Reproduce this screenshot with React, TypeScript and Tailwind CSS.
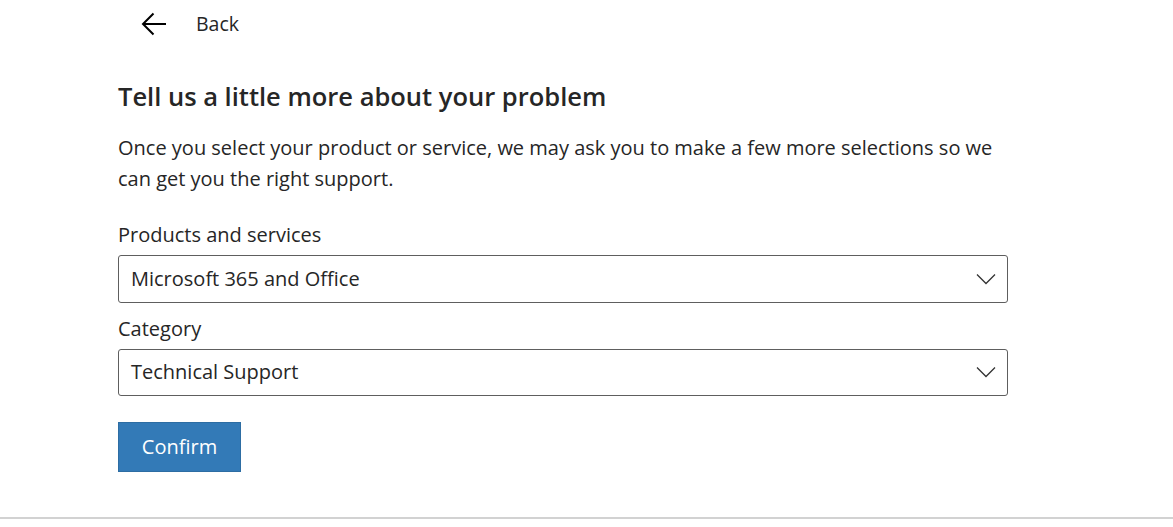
const font = { fontFamily: '"Open Sans", "Noto Sans", sans-serif' };

function Chevron() {
    return (
        <svg width="20" height="12" viewBox="0 0 20 12" fill="none" className="text-[#333]">
            <path d="M1 1.5 L10 10.5 L19 1.5" stroke="currentColor" strokeWidth="1.3" />
        </svg>
    );
}

function SelectBox({ label, value }: { label: string; value: string }) {
    return (
        <div className="flex flex-col">
            <label className="text-[20px] leading-[26px] text-[#262626]">{label}</label>
            <div className="mt-[7px] h-[47.5px] flex items-center justify-between border border-[#5e5e5e] rounded-[3px] pl-[12px] pr-[11px]">
                <span className="text-[20px] text-[#262626]">{value}</span>
                <Chevron />
            </div>
        </div>
    );
}

export default function App() {
    return (
        <div className="w-[1173px] h-[527px] bg-white flex flex-col" style={font}>
            <div className="flex-1 pl-[118px]">
                {/* Back link */}
                <div className="h-[47px] flex items-center pl-[23px] gap-[29px] text-[#262626]">
                    <svg width="26" height="24" viewBox="0 0 26 24" fill="none" className="text-black">
                        <path d="M12.5 1.5 L2 12 L12.5 22.5 M2 12 H25" stroke="currentColor" strokeWidth="2" />
                    </svg>
                    <span className="text-[19.5px]">Back</span>
                </div>

                <div className="w-[890px] pt-[32px]">
                    <h1 className="text-[25.5px] font-semibold leading-[34px] text-[#262626]">
                        Tell us a little more about your problem
                    </h1>
                    <p className="mt-[19px] text-[20px] leading-[31px] text-[#262626]">
                        Once you select your product or service, we may ask you to make a few more selections so we can get you the right support.
                    </p>

                    <div className="mt-[28px] flex flex-col gap-[13px]">
                        <SelectBox label="Products and services" value="Microsoft 365 and Office" />
                        <SelectBox label="Category" value="Technical Support" />
                    </div>

                    <button className="mt-[26px] w-[123px] h-[50px] bg-[#337ab7] border border-[#2d6da3] text-white text-[20px]">
                        Confirm
                    </button>
                </div>
            </div>
            <div className="h-[10px] border-t-2 border-[#d2d2d2]" />
        </div>
    );
}
